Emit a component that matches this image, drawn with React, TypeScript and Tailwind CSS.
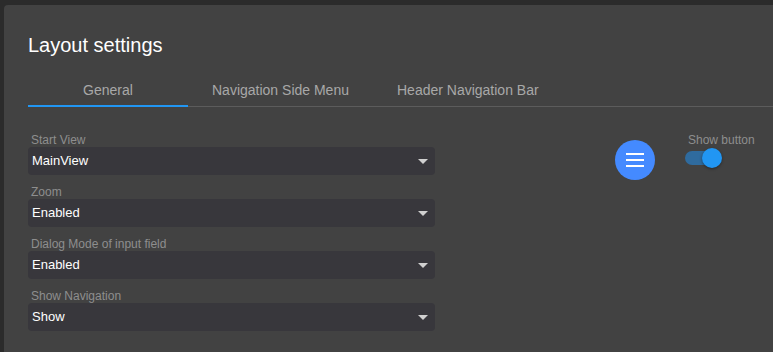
import React from "react";

/* ---------- data ---------- */

const tabs = ["General", "Navigation Side Menu", "Header Navigation Bar"];

const fields = [
  { label: "Start View", value: "MainView" },
  { label: "Zoom", value: "Enabled" },
  { label: "Dialog Mode of input field", value: "Enabled" },
  { label: "Show Navigation", value: "Show" },
];

/* ---------- pieces ---------- */

function SelectField({ label, value }: { label: string; value: string }) {
  return (
    <div className="flex flex-col">
      <span className="pl-[3px] text-[12px] leading-[14px] text-[#8e8e8e]">{label}</span>
      <div className="flex h-7 items-center justify-between rounded-[4px] bg-[#38373c] pl-1 pr-[7px]">
        <span className="text-[13px] text-white">{value}</span>
        <svg width="10" height="5" viewBox="0 0 10 5">
          <path d="M0 0h10L5 5z" fill="#d0d0d0" />
        </svg>
      </div>
    </div>
  );
}

function MenuFab() {
  return (
    <button className="mt-[7px] flex h-10 w-10 flex-col items-center justify-center gap-[4px] rounded-full bg-[#448aff]">
      <span className="h-[2px] w-[18px] bg-white" />
      <span className="h-[2px] w-[18px] bg-white" />
      <span className="h-[2px] w-[18px] bg-white" />
    </button>
  );
}

function ShowToggle() {
  return (
    <div className="ml-[30px] flex flex-col">
      <span className="pl-[3px] text-[12px] leading-[14px] text-[#8e8e8e]">Show button</span>
      <div className="relative mt-[1px] h-5 w-[37px]">
        <div className="absolute left-0 top-[3px] h-[14px] w-[34px] rounded-full bg-[#2f6b9e]" />
        <div className="absolute left-[17px] top-0 h-5 w-5 rounded-full bg-[#2196f3] shadow-[0_1px_3px_rgba(0,0,0,0.4)]" />
      </div>
    </div>
  );
}

/* ---------- page ---------- */

export default function App() {
  return (
    <div
      className="h-[352px] w-[773px] overflow-hidden bg-[#2b2b2b] pl-1 pt-[5px]"
      style={{ fontFamily: '"Liberation Sans", Arial, sans-serif' }}
    >
      <div className="h-full rounded-tl-[4px] bg-[#424242] pl-6 pt-[26px]">
        <h1 className="text-[20px] leading-[28px] text-white">Layout settings</h1>

        <div className="mt-[13px] flex border-b border-[#5c5c5c]">
          {tabs.map((t, i) => (
            <div
              key={t}
              className="relative flex h-[34px] min-w-[160px] items-center justify-center px-6 pt-[2px] text-[14px] text-[#a8a8a8]"
            >
              {t}
              {i === 0 && (
                <div className="absolute bottom-[-1px] left-0 right-0 h-[2px] bg-[#2196f3]" />
              )}
            </div>
          ))}
        </div>

        <div className="flex items-start pt-[26px]">
          <div className="flex w-[407px] flex-col gap-[10px]">
            {fields.map((f) => (
              <SelectField key={f.label} label={f.label} value={f.value} />
            ))}
          </div>
          <div className="ml-[180px]">
            <MenuFab />
          </div>
          <ShowToggle />
        </div>
      </div>
    </div>
  );
}
